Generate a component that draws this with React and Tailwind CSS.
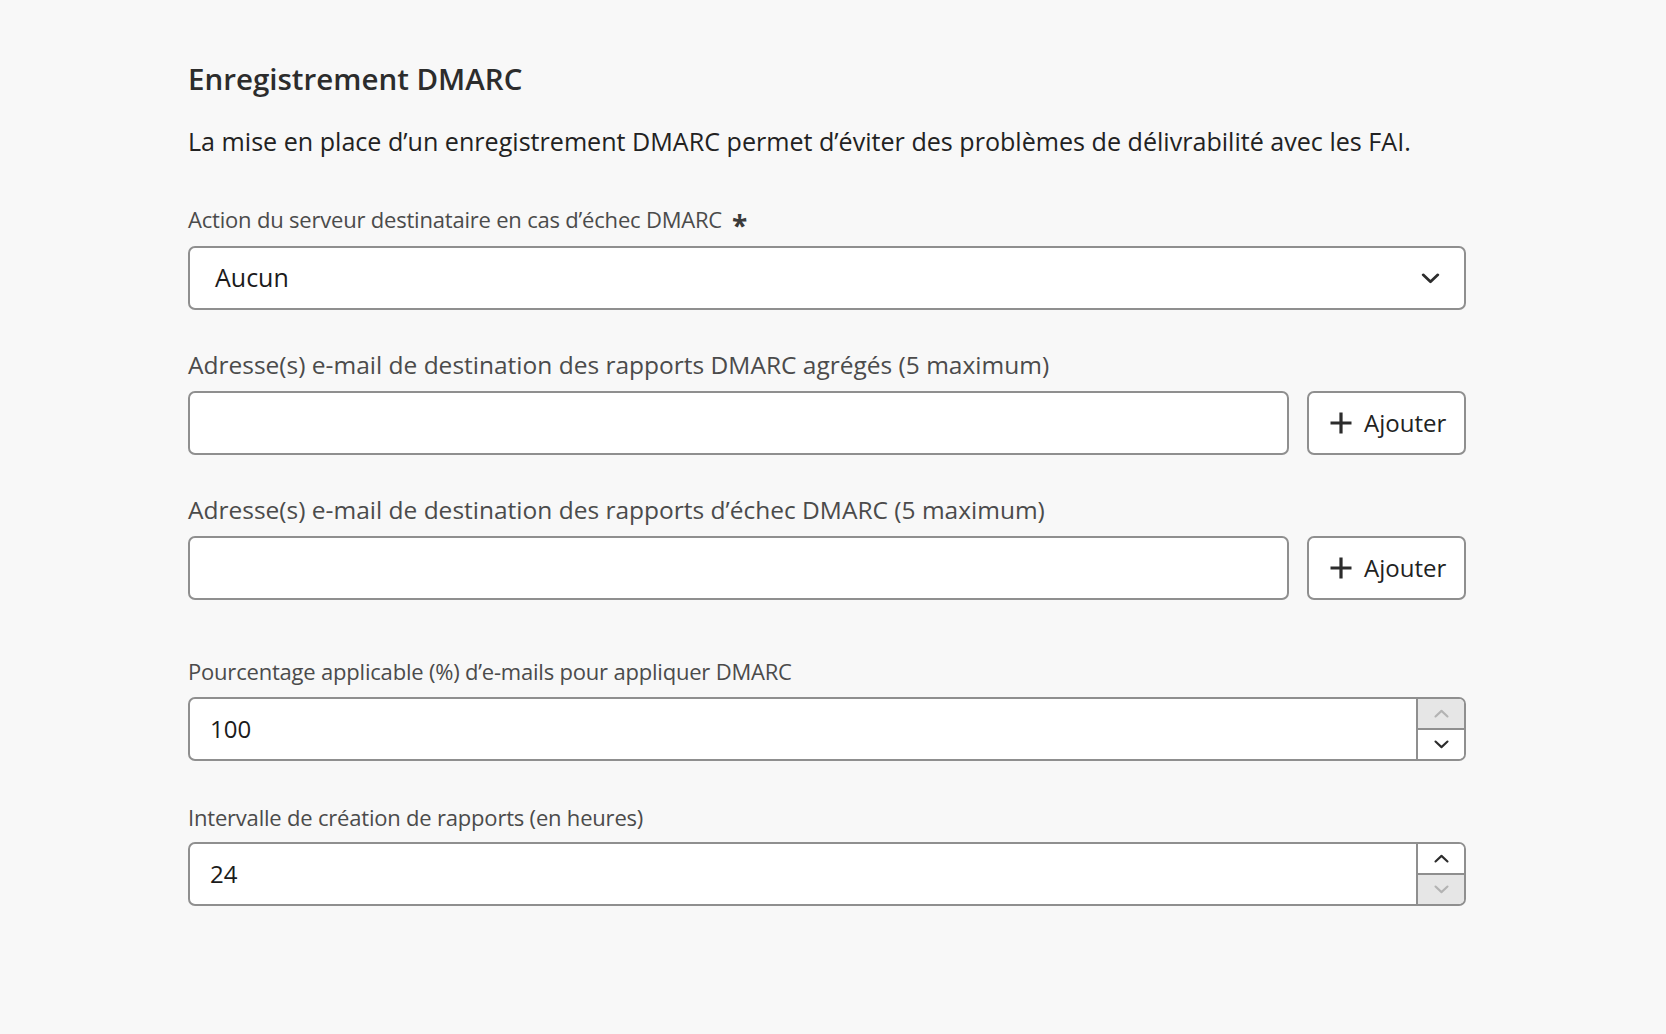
import React from 'react';

function Chevron({ up = false, className = '', width = '2.6' }) {
  return (
    <svg viewBox="0 0 20 12" className={className} fill="none">
      <path
        d={up ? 'M2 10 L10 2.5 L18 10' : 'M2 2 L10 9.5 L18 2'}
        stroke="currentColor"
        strokeWidth={width}
        strokeLinecap="round"
        strokeLinejoin="round"
      />
    </svg>
  );
}

function AddButton() {
  return (
    <button className="h-[64px] w-[159px] shrink-0 flex items-center pl-[20px] gap-[11px] bg-white border-2 border-[#8f8f8f] rounded-[7px] text-[24px] text-[#222]">
      <svg viewBox="0 0 24 24" className="w-[24px] h-[24px] text-[#2c2c2c]" fill="none">
        <path d="M12 1.5 V22.5 M1.5 12 H22.5" stroke="currentColor" strokeWidth="3.2" />
      </svg>
      <span>Ajouter</span>
    </button>
  );
}

function NumberField({ value, upEnabled }) {
  return (
    <div className="h-[64px] flex bg-white border-2 border-[#8f8f8f] rounded-[7px] overflow-hidden">
      <div className="flex-1 flex items-center pl-[20px] text-[24px] text-[#1b1b1b]">{value}</div>
      <div className="w-[48px] flex flex-col border-l-2 border-[#8f8f8f]">
        <div
          className={
            upEnabled
              ? 'flex-1 flex items-center justify-center bg-white text-[#2c2c2c] border-b-2 border-[#8f8f8f]'
              : 'flex-1 flex items-center justify-center bg-[#e6e6e6] text-[#b3b3b3] border-b-2 border-[#8f8f8f]'
          }
        >
          <Chevron up className="w-[15px] h-[9px]" width="2.8" />
        </div>
        <div
          className={
            upEnabled
              ? 'flex-1 flex items-center justify-center bg-[#e6e6e6] text-[#b3b3b3]'
              : 'flex-1 flex items-center justify-center bg-white text-[#2c2c2c]'
          }
        >
          <Chevron className="w-[15px] h-[9px]" width="2.8" />
        </div>
      </div>
    </div>
  );
}

export default function App() {
  return (
    <div className="min-h-screen bg-[#f8f8f8] font-['Open_Sans',sans-serif] pt-[63px] pl-[188px]">
      <div className="w-[1278px] flex flex-col">
        <h2 className="text-[29.5px] leading-[32px] font-semibold text-[#2c2c2c]">
          Enregistrement DMARC
        </h2>
        <p className="mt-[31px] text-[25.1px] leading-[30px] text-[#222]">
          La mise en place d’un enregistrement DMARC permet d’éviter des problèmes de délivrabilité avec les FAI.
        </p>

        {/* action */}
        <label className="mt-[49px] text-[22px] leading-[28px] text-[#4b4b4b] tracking-[-0.2px] flex items-center">
          Action du serveur destinataire en cas d’échec DMARC
          <span className="ml-[10px] text-[28px] leading-none font-bold text-[#3a3a3a] translate-y-[6px]">*</span>
        </label>
        <div className="mt-[13px] h-[64px] flex items-center justify-between bg-white border-2 border-[#8f8f8f] rounded-[7px] pl-[25px] pr-[24px]">
          <span className="text-[25px] text-[#1b1b1b]">Aucun</span>
          <Chevron className="w-[19px] h-[11px] text-[#2c2c2c]" width="3" />
        </div>

        {/* aggregated reports */}
        <label className="mt-[41px] text-[24.5px] leading-[28px] text-[#4b4b4b]">
          Adresse(s) e-mail de destination des rapports DMARC agrégés (5 maximum)
        </label>
        <div className="mt-[12px] flex gap-[18px]">
          <div className="flex-1 h-[64px] bg-white border-2 border-[#8f8f8f] rounded-[7px]" />
          <AddButton />
        </div>

        {/* failure reports */}
        <label className="mt-[41px] text-[24.5px] leading-[28px] text-[#4b4b4b]">
          Adresse(s) e-mail de destination des rapports d’échec DMARC (5 maximum)
        </label>
        <div className="mt-[12px] flex gap-[18px]">
          <div className="flex-1 h-[64px] bg-white border-2 border-[#8f8f8f] rounded-[7px]" />
          <AddButton />
        </div>

        {/* percentage */}
        <label className="mt-[57px] text-[22px] leading-[28px] text-[#4b4b4b] tracking-[-0.2px]">
          Pourcentage applicable (%) d’e-mails pour appliquer DMARC
        </label>
        <div className="mt-[12px]">
          <NumberField value="100" upEnabled={false} />
        </div>

        {/* interval */}
        <label className="mt-[42px] text-[22px] leading-[28px] text-[#4b4b4b] tracking-[-0.2px]">
          Intervalle de création de rapports (en heures)
        </label>
        <div className="mt-[11px]">
          <NumberField value="24" upEnabled />
        </div>
      </div>
    </div>
  );
}
